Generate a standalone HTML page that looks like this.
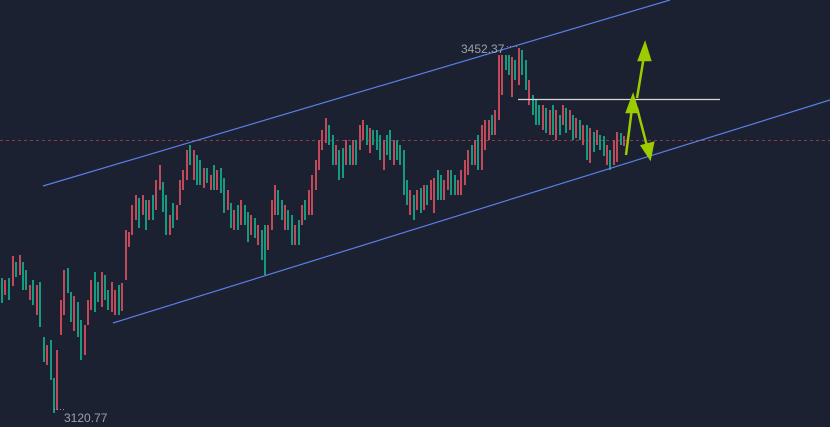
<!DOCTYPE html>
<html><head><meta charset="utf-8"><style>
html,body{margin:0;padding:0;background:#1b2130;width:830px;height:427px;overflow:hidden}
svg{display:block}
</style></head><body>
<svg width="830" height="427" xmlns="http://www.w3.org/2000/svg">
<rect width="830" height="427" fill="#1b2130"/>
<line x1="0" y1="140.5" x2="830" y2="140.5" stroke="#a8424e" stroke-width="1" stroke-dasharray="3,3" opacity="0.8"/>
<g fill="#159a80">
<rect x="1" y="278" width="2" height="25"/><rect x="8" y="278" width="2" height="22"/><rect x="15" y="262" width="2" height="15"/><rect x="22" y="262" width="2" height="28"/><rect x="25" y="270" width="2" height="20"/><rect x="32" y="280" width="2" height="25"/><rect x="39" y="282" width="2" height="45"/><rect x="43" y="337" width="2" height="25"/><rect x="50" y="340" width="2" height="40"/><rect x="53" y="378" width="2" height="35"/><rect x="67" y="268" width="2" height="25"/><rect x="70" y="292" width="2" height="30"/><rect x="77" y="302" width="2" height="35"/><rect x="80" y="320" width="2" height="40"/><rect x="94" y="272" width="2" height="40"/><rect x="97" y="282" width="2" height="20"/><rect x="104" y="275" width="2" height="25"/><rect x="107" y="290" width="2" height="20"/><rect x="118" y="285" width="2" height="30"/>
<rect x="138" y="198" width="2" height="30"/><rect x="145" y="200" width="2" height="30"/><rect x="152" y="195" width="2" height="25"/><rect x="162" y="182" width="2" height="30"/><rect x="165" y="195" width="2" height="40"/><rect x="172" y="203" width="2" height="25"/><rect x="189" y="145" width="2" height="20"/><rect x="196" y="155" width="2" height="30"/><rect x="199" y="160" width="2" height="25"/><rect x="206" y="168" width="2" height="15"/><rect x="213" y="165" width="2" height="25"/><rect x="220" y="168" width="2" height="25"/><rect x="223" y="178" width="2" height="35"/><rect x="230" y="203" width="2" height="25"/><rect x="237" y="205" width="2" height="25"/><rect x="244" y="205" width="2" height="20"/><rect x="247" y="212" width="2" height="30"/><rect x="254" y="218" width="2" height="20"/><rect x="261" y="230" width="2" height="30"/><rect x="264" y="225" width="2" height="50"/><rect x="277" y="190" width="2" height="25"/><rect x="281" y="200" width="2" height="20"/><rect x="287" y="210" width="2" height="20"/><rect x="291" y="215" width="2" height="30"/><rect x="298" y="220" width="2" height="25"/><rect x="304" y="200" width="2" height="20"/>
<rect x="328" y="125" width="2" height="20"/><rect x="332" y="135" width="2" height="30"/><rect x="338" y="150" width="2" height="30"/><rect x="342" y="148" width="2" height="30"/><rect x="349" y="145" width="2" height="20"/><rect x="355" y="140" width="2" height="25"/><rect x="366" y="125" width="2" height="20"/><rect x="372" y="130" width="2" height="15"/><rect x="376" y="130" width="2" height="20"/><rect x="379" y="135" width="2" height="25"/><rect x="386" y="135" width="2" height="20"/><rect x="389" y="130" width="2" height="30"/><rect x="396" y="140" width="2" height="20"/><rect x="399" y="145" width="2" height="20"/><rect x="403" y="150" width="2" height="45"/><rect x="406" y="180" width="2" height="25"/><rect x="413" y="195" width="2" height="25"/><rect x="420" y="188" width="2" height="25"/><rect x="426" y="185" width="2" height="20"/><rect x="437" y="170" width="2" height="30"/><rect x="440" y="175" width="2" height="25"/><rect x="450" y="170" width="2" height="25"/><rect x="454" y="175" width="2" height="20"/><rect x="471" y="145" width="2" height="20"/><rect x="477" y="135" width="2" height="35"/><rect x="491" y="115" width="2" height="20"/>
<rect x="505" y="55" width="2" height="15"/><rect x="508" y="55" width="2" height="20"/><rect x="514" y="60" width="2" height="20"/><rect x="521" y="50" width="2" height="25"/><rect x="525" y="60" width="2" height="30"/><rect x="532" y="95" width="2" height="20"/><rect x="535" y="100" width="2" height="25"/><rect x="538" y="105" width="2" height="20"/><rect x="545" y="108" width="2" height="25"/><rect x="552" y="105" width="2" height="30"/><rect x="559" y="115" width="2" height="20"/><rect x="565" y="108" width="2" height="25"/><rect x="572" y="115" width="2" height="25"/><rect x="579" y="120" width="2" height="20"/><rect x="586" y="125" width="2" height="35"/><rect x="593" y="132" width="2" height="20"/><rect x="599" y="135" width="2" height="15"/><rect x="603" y="136" width="2" height="20"/><rect x="609" y="150" width="2" height="20"/><rect x="620" y="133" width="2" height="12"/>
</g>
<g fill="#c04a5a">
<rect x="4" y="280" width="2" height="15"/><rect x="12" y="256" width="2" height="30"/><rect x="19" y="255" width="2" height="20"/><rect x="29" y="285" width="2" height="15"/><rect x="36" y="285" width="2" height="30"/><rect x="46" y="345" width="2" height="20"/><rect x="56" y="350" width="2" height="60"/><rect x="60" y="300" width="2" height="35"/><rect x="63" y="270" width="2" height="45"/><rect x="73" y="296" width="2" height="35"/><rect x="84" y="325" width="2" height="30"/><rect x="87" y="300" width="2" height="25"/><rect x="90" y="280" width="2" height="30"/><rect x="101" y="272" width="2" height="35"/><rect x="111" y="282" width="2" height="30"/><rect x="114" y="290" width="2" height="25"/><rect x="121" y="283" width="2" height="28"/>
<rect x="125" y="230" width="2" height="50"/><rect x="128" y="232" width="2" height="15"/><rect x="131" y="205" width="2" height="30"/><rect x="135" y="195" width="2" height="25"/><rect x="142" y="195" width="2" height="20"/><rect x="148" y="200" width="2" height="20"/><rect x="155" y="180" width="2" height="30"/><rect x="159" y="165" width="2" height="25"/><rect x="169" y="215" width="2" height="20"/><rect x="176" y="205" width="2" height="15"/><rect x="179" y="180" width="2" height="25"/><rect x="182" y="170" width="2" height="20"/><rect x="186" y="150" width="2" height="30"/><rect x="193" y="150" width="2" height="30"/><rect x="203" y="168" width="2" height="20"/><rect x="210" y="175" width="2" height="15"/><rect x="216" y="170" width="2" height="20"/><rect x="227" y="190" width="2" height="20"/><rect x="233" y="210" width="2" height="20"/><rect x="240" y="200" width="2" height="25"/><rect x="250" y="215" width="2" height="20"/><rect x="257" y="225" width="2" height="20"/><rect x="267" y="225" width="2" height="25"/><rect x="271" y="200" width="2" height="30"/><rect x="274" y="185" width="2" height="30"/><rect x="284" y="205" width="2" height="25"/><rect x="294" y="225" width="2" height="20"/><rect x="301" y="205" width="2" height="20"/><rect x="308" y="190" width="2" height="25"/><rect x="311" y="175" width="2" height="40"/><rect x="315" y="160" width="2" height="30"/><rect x="318" y="140" width="2" height="30"/><rect x="321" y="130" width="2" height="20"/><rect x="325" y="118" width="2" height="25"/>
<rect x="335" y="145" width="2" height="20"/><rect x="345" y="140" width="2" height="25"/><rect x="352" y="140" width="2" height="25"/><rect x="359" y="125" width="2" height="25"/><rect x="362" y="120" width="2" height="20"/><rect x="369" y="128" width="2" height="25"/><rect x="383" y="140" width="2" height="30"/><rect x="393" y="140" width="2" height="25"/><rect x="409" y="190" width="2" height="25"/><rect x="416" y="190" width="2" height="20"/><rect x="423" y="185" width="2" height="25"/><rect x="430" y="180" width="2" height="20"/><rect x="433" y="178" width="2" height="35"/><rect x="443" y="180" width="2" height="20"/><rect x="447" y="170" width="2" height="20"/><rect x="457" y="180" width="2" height="15"/><rect x="460" y="170" width="2" height="25"/><rect x="464" y="160" width="2" height="25"/><rect x="467" y="150" width="2" height="25"/><rect x="474" y="140" width="2" height="25"/><rect x="481" y="125" width="2" height="45"/><rect x="484" y="120" width="2" height="30"/><rect x="488" y="120" width="2" height="20"/><rect x="494" y="110" width="2" height="25"/>
<rect x="498" y="55" width="2" height="65"/><rect x="501" y="55" width="2" height="40"/><rect x="511" y="57" width="2" height="40"/><rect x="518" y="48" width="2" height="37"/><rect x="528" y="80" width="2" height="25"/><rect x="542" y="105" width="2" height="25"/><rect x="549" y="110" width="2" height="25"/><rect x="555" y="110" width="2" height="30"/><rect x="562" y="105" width="2" height="20"/><rect x="569" y="110" width="2" height="20"/><rect x="575" y="118" width="2" height="20"/><rect x="582" y="125" width="2" height="20"/><rect x="589" y="128" width="2" height="35"/><rect x="596" y="130" width="2" height="15"/><rect x="606" y="145" width="2" height="20"/><rect x="613" y="140" width="2" height="25"/><rect x="616" y="132" width="2" height="30"/><rect x="623" y="136" width="2" height="10"/>
</g>
<line x1="43" y1="186" x2="670" y2="0" stroke="#5b7ee6" stroke-width="1.2"/>
<line x1="113" y1="323" x2="830" y2="100" stroke="#5b7ee6" stroke-width="1.2"/>
<line x1="518" y1="99.5" x2="720" y2="99.5" stroke="#d8d8d8" stroke-width="1.2"/>
<g stroke="#9ccc00" stroke-width="2.5" fill="#9ccc00">
<line x1="626" y1="155" x2="632" y2="108"/>
<polygon points="633,96 627,112 638,112"/>
<line x1="637" y1="98" x2="644" y2="56"/>
<polygon points="645,44 639,60 650,60"/>
<line x1="637" y1="108" x2="647" y2="146"/>
<polygon points="650,158 642,146 653,143"/>
</g>
<text x="461" y="53" font-family="Liberation Sans, sans-serif" font-size="12" fill="#9aa0ab">3452.37</text>
<text x="506" y="49" font-family="Liberation Sans, sans-serif" font-size="9" fill="#9aa0ab">····</text>
<text x="53" y="412" font-family="Liberation Sans, sans-serif" font-size="9" fill="#9aa0ab">····</text>
<text x="64" y="422" font-family="Liberation Sans, sans-serif" font-size="12" fill="#9aa0ab">3120.77</text>
</svg>
</body></html>
